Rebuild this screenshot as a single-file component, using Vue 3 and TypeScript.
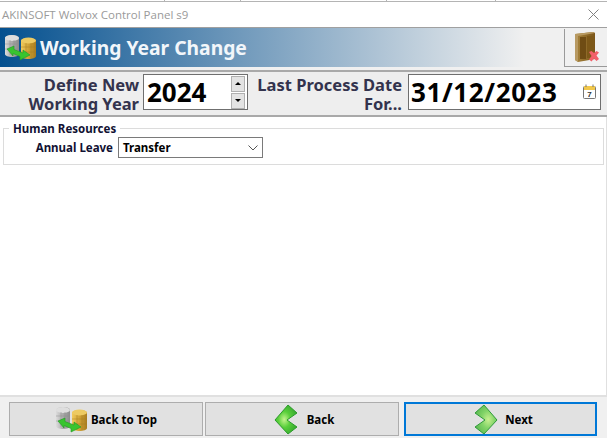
<template>
  <div class="window">
    <div class="strip">
      <span class="cell" v-for="w in stripCells" :key="w" :style="{ width: w + 'px' }"></span>
    </div>
    <div class="titlebar">
      <span class="title-text">AKINSOFT Wolvox Control Panel s9</span>
      <svg class="close" width="11" height="11" viewBox="0 0 11 11">
        <path d="M0.5 0.5L10.5 10.5M10.5 0.5L0.5 10.5" stroke="#808080" stroke-width="1" fill="none" />
      </svg>
    </div>

    <div class="banner">
      <div class="banner-grad">
        <svg class="db-icon" width="33" height="27" viewBox="0 0 33 27">
          <use href="#db" />
        </svg>
        <span class="banner-title">Working Year Change</span>
      </div>
      <div class="exit-box">
        <svg width="25" height="31" viewBox="0 0 25 31">
          <path d="M1 2L19 0L21 1V27L4 30L1 28Z" fill="url(#door)" />
          <path d="M1 2L19 0L21 1L4 4V30L1 28Z" fill="#b89a62" />
          <rect x="6" y="5" width="6" height="22" fill="#6f4c14" />
          <rect x="13" y="4" width="6" height="22" fill="#7d5818" />
          <path d="M15 20L17.5 19L20 21L22.5 19L25 20.5L22.5 23.5L25 27L22.5 29L20 26.5L17.5 29.5L15 27.5L17.5 24Z" fill="#f2606a" />
        </svg>
      </div>
    </div>

    <div class="params">
      <label class="param-label year-label">Define New<br />Working Year</label>
      <div class="year-box">
        <span class="big-value">2024</span>
        <div class="spin">
          <button class="spin-btn"><i class="arrow up"></i></button>
          <button class="spin-btn"><i class="arrow down"></i></button>
        </div>
      </div>
      <label class="param-label date-label">Last Process Date<br />For...</label>
      <div class="date-box">
        <span class="big-value date-value">31/12/2023</span>
        <svg class="cal" width="13" height="15" viewBox="0 0 13 15">
          <rect x="0.5" y="2.5" width="12" height="12" rx="1" fill="#fff" stroke="#777" />
          <rect x="1" y="2" width="11" height="4" fill="#f2c84b" />
          <path d="M3 0.5V3M10 0.5V3" stroke="#777" />
          <text x="6.5" y="13" class="cal-num">7</text>
        </svg>
      </div>
    </div>

    <div class="content">
      <fieldset class="group">
        <legend>Human Resources</legend>
        <div class="field">
          <span class="field-label">Annual Leave</span>
          <div class="select">
            <span>Transfer</span>
            <svg width="10" height="6" viewBox="0 0 10 6">
              <path d="M0.5 0.5L5 5L9.5 0.5" stroke="#555" fill="none" />
            </svg>
          </div>
        </div>
      </fieldset>
    </div>

    <div class="footer">
      <button class="foot-btn">
        <svg width="33" height="27" viewBox="0 0 33 27"><use href="#db" /></svg>
        <span>Back to Top</span>
      </button>
      <button class="foot-btn back">
        <svg width="24" height="31" viewBox="0 0 24 31">
          <use href="#chev-left" />
        </svg>
        <span>Back</span>
      </button>
      <button class="foot-btn active">
        <svg width="24" height="31" viewBox="0 0 24 31">
          <use href="#chev-right" />
        </svg>
        <span>Next</span>
      </button>
    </div>

    <svg width="0" height="0" class="defs">
      <defs>
        <linearGradient id="silver" x1="0" x2="1" y1="0" y2="0">
          <stop offset="0" stop-color="#dcdcdc" />
          <stop offset="0.5" stop-color="#aaaaaa" />
          <stop offset="1" stop-color="#8c8c8c" />
        </linearGradient>
        <linearGradient id="gold" x1="0" x2="1" y1="0" y2="0">
          <stop offset="0" stop-color="#f2cb5c" />
          <stop offset="0.6" stop-color="#c89a30" />
          <stop offset="1" stop-color="#a87c20" />
        </linearGradient>
        <linearGradient id="door" x1="0" x2="1" y1="0" y2="0">
          <stop offset="0" stop-color="#a9863f" />
          <stop offset="1" stop-color="#7a5518" />
        </linearGradient>
        <radialGradient id="glow-left" cx="0.42" cy="0.5" r="0.55">
          <stop offset="0" stop-color="#c4f48e" />
          <stop offset="0.5" stop-color="#58cf3a" />
          <stop offset="1" stop-color="#3bae30" />
        </radialGradient>
        <radialGradient id="glow-right" cx="0.6" cy="0.5" r="0.6">
          <stop offset="0" stop-color="#c8f090" />
          <stop offset="0.5" stop-color="#82d468" />
          <stop offset="1" stop-color="#5fbb52" />
        </radialGradient>
        <g id="db">
          <path d="M1 4C1 0 15 0 15 4V20C15 24 1 24 1 20Z" fill="url(#silver)" />
          <ellipse cx="8" cy="4" rx="7" ry="3" fill="#dedede" />
          <path d="M1 10H15M1 15H15M6 6V21M10 6V21" stroke="#8f8f8f" stroke-width="0.5" />
          <path d="M17 7C17 3 32 3 32 7V22C32 26 17 26 17 22Z" fill="url(#gold)" />
          <ellipse cx="24.5" cy="6.5" rx="7.5" ry="3" fill="#edca62" />
          <path d="M17 13H32M17 18H32M22 9V24M27 9V24" stroke="#a67c22" stroke-width="0.5" />
          <path d="M3 15L10 12V15.5L19 19V16L26 21L16 26V22.5L9 19.5V22Z" fill="#38c42f" stroke="#209a24" stroke-width="0.6" />
        </g>
        <g id="chev-left">
          <path d="M14 1L23 9L13 16L23 23L14 30L1 16Z" fill="url(#glow-left)" stroke="#2c9a2c" />
        </g>
        <g id="chev-right">
          <path d="M10 1L23 16L10 30L1 23L11 16L1 9Z" fill="url(#glow-right)" stroke="#2f9a3a" />
        </g>
      </defs>
    </svg>
  </div>
</template>

<script setup lang="ts">
const stripCells: number[] = [165, 76, 146, 109]
</script>

<style>
html, body { margin: 0; background: #fff; }
</style>

<style scoped>
.window { width: 607px; height: 438px; display: flex; flex-direction: column; background: #f0f0f0; overflow: hidden; font-family: "Noto Sans", "Open Sans", sans-serif; position: relative; }
.defs { position: absolute; }

.strip { height: 2px; box-sizing: border-box; border-bottom: 1px solid #b4b4b4; background: #fff; flex: none; display: flex; }
.cell { height: 1px; box-sizing: border-box; border-right: 1px solid #b4b4b4; }

.titlebar { height: 25px; flex: none; background: #fff; border-bottom: 1px solid #a0a0a0; box-sizing: content-box; display: flex; align-items: center; justify-content: space-between; padding: 0 8px 0 2px; }
.title-text { font-size: 11.5px; color: #9a9a9a; font-family: "Open Sans", sans-serif; }

.banner { height: 39px; flex: none; display: flex; background: #f0f0f0; }
.banner-grad { flex: 1; display: flex; align-items: center; padding-left: 4px; gap: 3px; background: linear-gradient(to right, #04508f 0%, #f0f0f0 93%); }
.db-icon { flex: none; }
.banner-title { font-size: 19.3px; font-weight: 700; color: #f2f6fa; white-space: nowrap; }
.exit-box { width: 43px; height: 38px; flex: none; border-left: 1px solid #9a9a9a; border-bottom: 1px solid #9a9a9a; box-sizing: border-box; display: flex; align-items: center; justify-content: center; margin-top: 1px; background: #f0f0f0; }

.params { height: 47px; flex: none; margin-top: 3px; box-sizing: border-box; border-top: 2px solid #a9a9a9; border-bottom: 2px solid #a9a9a9; display: flex; align-items: center; padding: 0 4px 3px 0; background: #eeeeee; }
.param-label { font-size: 16.5px; font-weight: 700; color: #33334d; line-height: 19px; text-align: right; flex: none; margin-top: 3px; white-space: nowrap; }
.year-label { width: 139px; }
.date-label { width: 146px; margin-left: 8px; }
.year-box { width: 105px; height: 36px; margin-left: 4px; box-sizing: border-box; border: 1px solid #6f6f6f; background: #fff; display: flex; align-items: center; justify-content: space-between; padding: 1px 1px 1px 3px; flex: none; }
.date-box { width: 193px; height: 36px; margin-left: 6px; margin-top: -1px; box-sizing: border-box; border: 1px solid #6f6f6f; background: #fff; display: flex; align-items: center; justify-content: space-between; padding: 0 4px 0 2px; flex: none; }
.big-value { font-size: 26px; font-weight: 700; color: #000; line-height: 30px; }
.date-value { letter-spacing: 0.6px; }
.spin { width: 14px; display: flex; flex-direction: column; gap: 1px; height: 33px; margin-right: 1px; }
.spin-btn { flex: 1; padding: 0; background: #e3e3e3; border: 1px solid #b0b0b0; display: flex; align-items: center; justify-content: center; }
.arrow { width: 0; height: 0; border-left: 3px solid transparent; border-right: 3px solid transparent; }
.arrow.up { border-bottom: 3px solid #000; }
.arrow.down { border-top: 3px solid #000; }
.cal-num { font-size: 8px; font-weight: 700; text-anchor: middle; fill: #333; font-family: "Liberation Sans", sans-serif; }

.content { flex: 1; background: #fff; border-right: 1px solid #e0e0e0; border-bottom: 2px solid #e0e0e0; padding: 5px 2px 0 3px; min-height: 0; }
.group { margin: 0; padding: 0; border: 1px solid #dcdcdc; height: 43px; box-sizing: border-box; }
.group legend { font-size: 11.5px; font-weight: 700; color: #111133; padding: 0 4px; margin-left: 5px; line-height: 13px; }
.field { display: flex; align-items: center; gap: 5px; margin-top: 2px; }
.field-label { width: 109px; text-align: right; font-size: 11.5px; font-weight: 700; color: #111133; }
.select { width: 145px; height: 21px; box-sizing: border-box; border: 1px solid #7a7a7a; background: #fff; display: flex; align-items: center; justify-content: space-between; padding: 0 4px; font-size: 11.5px; font-weight: 700; color: #000; }

.footer { height: 41px; flex: none; display: flex; gap: 2px; padding: 5px 10px 0 9px; box-sizing: border-box; background: #f0f0f0; }
.foot-btn { height: 34px; width: 194px; flex: none; background: #e1e1e1; border: 1px solid #adadad; box-sizing: border-box; display: flex; align-items: center; justify-content: center; gap: 3px; font-family: inherit; font-size: 11.5px; font-weight: 700; color: #000; padding: 0; }
.foot-btn.back { gap: 9px; padding-left: 4px; }
.foot-btn.active { border: 2px solid #0078d7; margin-left: 3px; width: 193px; gap: 7px; padding-left: 6px; }
</style>
